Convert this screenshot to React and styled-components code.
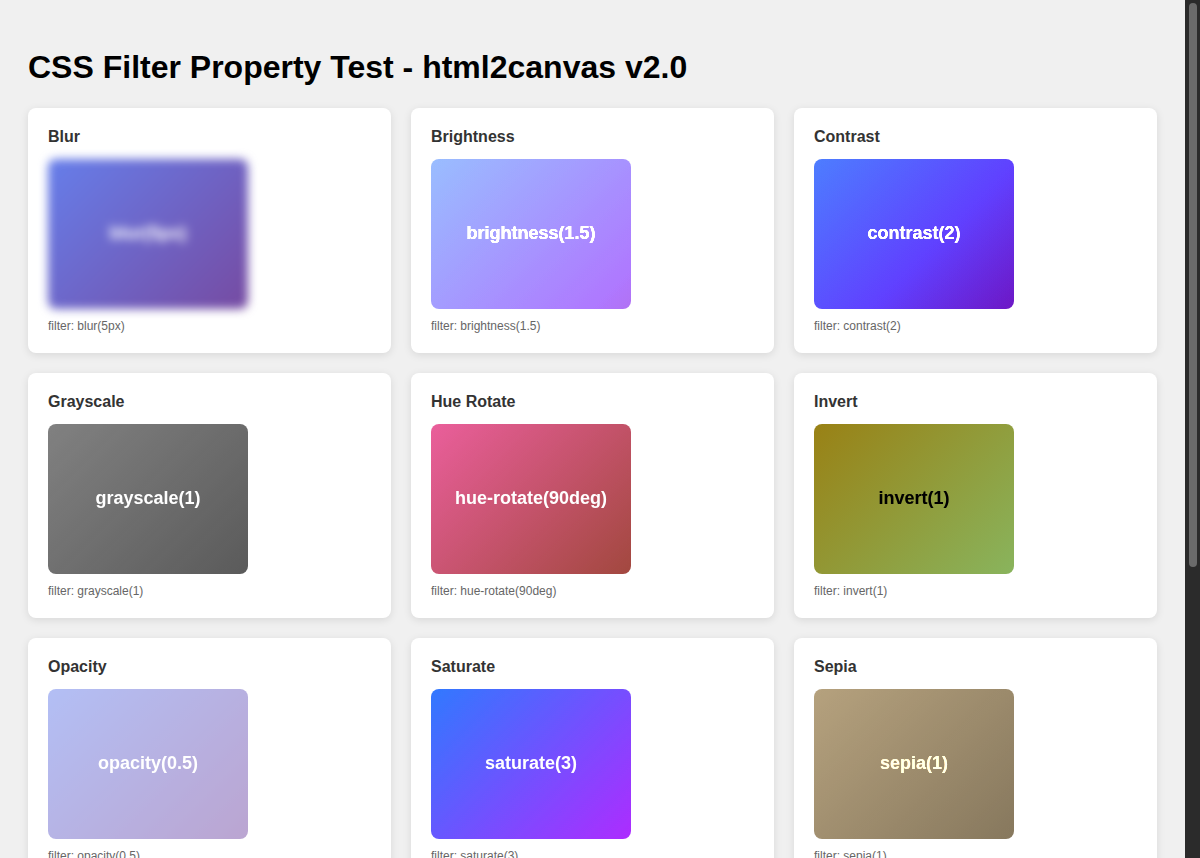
import React from "react";
import styled, { createGlobalStyle } from "styled-components";

const GlobalStyle = createGlobalStyle`
  html, body {
    height: 100%;
    overflow: hidden;
  }
  body {
    margin: 0;
    background: #f0f0f0;
    font-family: "Liberation Sans", Arial, sans-serif;
  }
`;

const Page = styled.div`
  display: flex;
  height: 100vh;
`;

const Main = styled.main`
  flex: 1;
  min-width: 0;
  overflow: hidden;
  padding: 28px;
`;

const ScrollTrack = styled.div`
  width: 15px;
  flex-shrink: 0;
  background: #2b2b2b;
  padding: 3px 3px 0 4px;
  box-sizing: border-box;
`;

const ScrollThumb = styled.div`
  height: 564px;
  background: #6b6b6b;
  border-radius: 4px;
`;

const Title = styled.h1`
  font-size: 32px;
  font-weight: bold;
  margin: 21.44px 0;
  color: #000;
`;

const Grid = styled.div`
  display: grid;
  grid-template-columns: repeat(3, 1fr);
  gap: 20px;
`;

const Card = styled.div`
  background: #fff;
  border-radius: 8px;
  padding: 20px;
  box-shadow: 0 2px 8px rgba(0, 0, 0, 0.1);
`;

const CardTitle = styled.h3`
  margin: 0 0 12.6px;
  font-size: 16px;
  line-height: 18.4px;
  color: #333;
`;

const FilterBox = styled.div`
  width: 200px;
  height: 150px;
  border-radius: 8px;
  background: linear-gradient(135deg, #667eea 0%, #764ba2 100%);
  display: flex;
  align-items: center;
  justify-content: center;
  color: #fff;
  font-weight: bold;
  font-size: 18px;
  filter: ${(p) => p.$filter};
`;

const Caption = styled.div`
  margin-top: 11px;
  font-size: 12px;
  line-height: 13px;
  color: #666;
`;

const Notes = styled.div`
  margin-top: 20px;
  height: 109px;
  box-sizing: border-box;
  background: #fff;
  border-radius: 8px;
  padding: 20px;
  font-size: 14px;
  color: #333;
  box-shadow: 0 2px 8px rgba(0, 0, 0, 0.1);
`;

const filters = [
  { name: "Blur", value: "blur(5px)" },
  { name: "Brightness", value: "brightness(1.5)" },
  { name: "Contrast", value: "contrast(2)" },
  { name: "Grayscale", value: "grayscale(1)" },
  { name: "Hue Rotate", value: "hue-rotate(90deg)" },
  { name: "Invert", value: "invert(1)" },
  { name: "Opacity", value: "opacity(0.5)" },
  { name: "Saturate", value: "saturate(3)" },
  { name: "Sepia", value: "sepia(1)" },
  { name: "Drop Shadow", value: "drop-shadow(4px 4px 6px rgba(0,0,0,0.5))", label: "drop-shadow" },
  { name: "Multiple Filters", value: "contrast(1.2) brightness(1.1) saturate(1.5)", label: "combined" },
  { name: "No Filter", value: "none" },
];

const App = () => (
  <Page>
    <GlobalStyle />
    <Main>
      <Title>CSS Filter Property Test - html2canvas v2.0</Title>
      <Grid>
        {filters.map((f) => (
          <Card key={f.name}>
            <CardTitle>{f.name}</CardTitle>
            <FilterBox $filter={f.value}>{f.label || f.value}</FilterBox>
            <Caption>filter: {f.value}</Caption>
          </Card>
        ))}
      </Grid>
      <Notes>Filters are rendered natively by the browser and captured by html2canvas.</Notes>
    </Main>
    <ScrollTrack>
      <ScrollThumb />
    </ScrollTrack>
  </Page>
);

export default App;
